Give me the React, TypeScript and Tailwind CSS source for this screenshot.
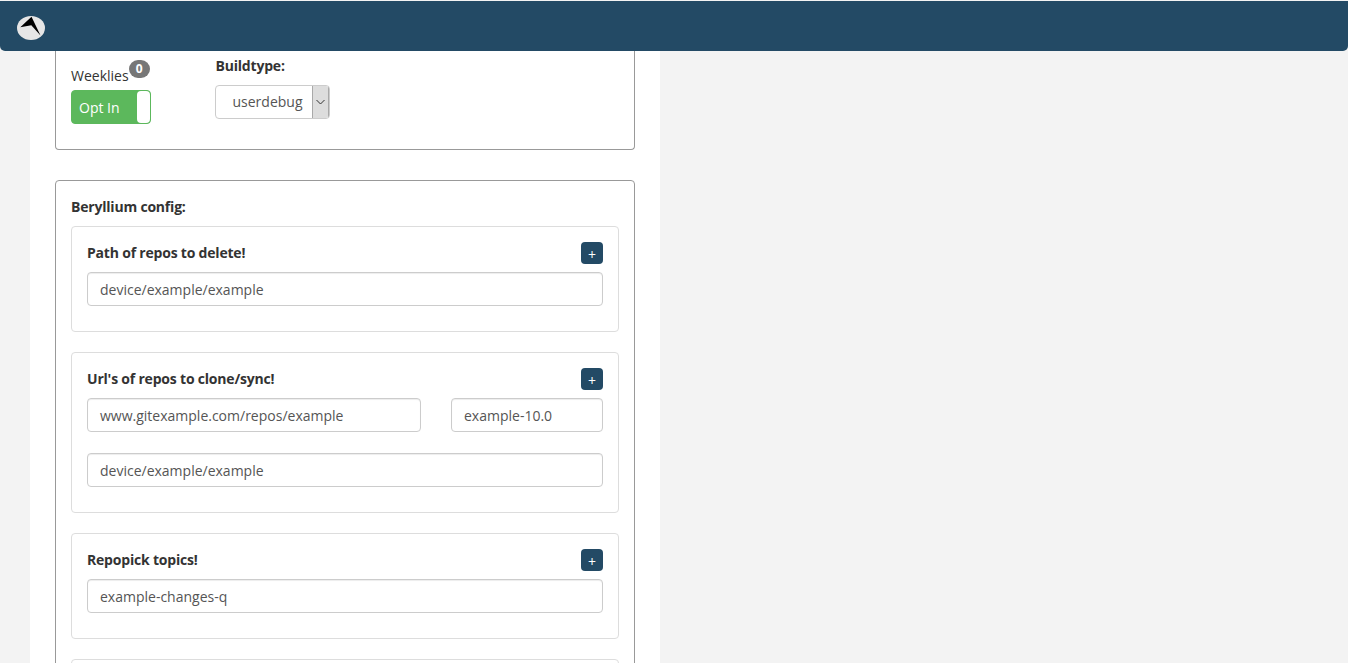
import React from "react";

function TextBox({ value, className = "" }: { value: string; className?: string }) {
  return (
    <div className={`h-[34px] rounded-[4px] border border-[#ccc] bg-white px-3 pt-px text-[14px] leading-[32px] text-[#555] shadow-[inset_0_1px_1px_rgba(0,0,0,0.075)] ${className}`}>
      {value}
    </div>
  );
}

function Head({ title }: { title: string }) {
  return (
    <div className="flex h-[30px] items-center justify-between">
      <b className="-mt-[2px] text-[14px] font-bold tracking-[-0.2px] text-[#333]">{title}</b>
      <span className="flex h-[22px] w-[22px] items-center justify-center rounded-[4px] bg-[#234a65] pt-[4px] text-[14px] leading-none text-white">+</span>
    </div>
  );
}

export default function App() {
  return (
    <div className="h-[663px] overflow-hidden bg-[#f3f3f3] pt-px font-['Open_Sans',sans-serif] text-[14px] text-[#333]">
      <header className="relative z-10 flex h-[50px] items-center rounded-b-[5px] bg-[#234a65] pl-[17px]">
        <svg className="mt-[4px]" width="28" height="24" viewBox="0 0 28 24">
          <ellipse cx="14" cy="12" rx="14" ry="12" fill="#e6e6e6" />
          <path d="M14.5 0.8 L23.5 19.5 L14.3 9.3 L3.3 11.2 Z" fill="#000" />
        </svg>
      </header>
      <main className="ml-[30px] h-[612px] w-[630px] bg-white px-[25px]">
        <section className="flex h-[99px] gap-[64px] rounded-b-[4px] border border-t-0 border-[#999] px-[15px]">
          <div className="w-[80px] pt-[13px]">
            <div className="relative h-[26px] leading-[24px]">
              Weeklies
              <span className="absolute left-[57.5px] -top-[4px] h-[18px] w-[21.5px] rounded-[9px] bg-[#777] text-center text-[12px] font-bold leading-[18px] text-white">0</span>
            </div>
            <div className="flex h-[34px] w-[80px] items-center justify-between rounded-[4px] border border-[#5cb85c] bg-[#5cb85c] pl-[7px] text-white">
              Opt In
              <span className="h-[32px] w-[13px] rounded-[4px] bg-white" />
            </div>
          </div>
          <div className="pt-[5px]">
            <b className="block h-[29px] pl-[0.5px] font-bold leading-[20px] tracking-[-0.2px]">Buildtype:</b>
            <div className="flex h-[34px] w-[115px] overflow-hidden rounded-[4px] border border-[#ccc] bg-white text-[#555]">
              <span className="flex-1 pl-[16.5px] leading-[32px]">userdebug</span>
              <span className="flex w-[17px] items-center justify-center border-x border-[#a9a9a9] bg-[#ddd]">
                <svg width="9" height="6" viewBox="0 0 9 6"><path d="M0.5 1 L4.5 5 L8.5 1" fill="none" stroke="#333" strokeWidth="1" /></svg>
              </span>
            </div>
          </div>
        </section>
        <section className="mt-[30px] rounded-[4px] border border-[#999] px-[15px] pt-[16px]">
          <b className="block h-[29px] font-bold leading-[20px] tracking-[-0.2px]">Beryllium config:</b>
          <div className="flex flex-col gap-[20px]">
            <div className="h-[106px] rounded-[4px] border border-[#ddd] px-[15px] pt-[11px]">
              <Head title="Path of repos to delete!" />
              <TextBox value="device/example/example" className="mt-[4px]" />
            </div>
            <div className="h-[161px] rounded-[4px] border border-[#ddd] px-[15px] pt-[11px]">
              <Head title="Url's of repos to clone/sync!" />
              <div className="mt-[4px] flex gap-[30px]">
                <TextBox value="www.gitexample.com/repos/example" className="w-[334px]" />
                <TextBox value="example-10.0" className="flex-1" />
              </div>
              <TextBox value="device/example/example" className="mt-[21px]" />
            </div>
            <div className="h-[106px] rounded-[4px] border border-[#ddd] px-[15px] pt-[11px]">
              <Head title="Repopick topics!" />
              <TextBox value="example-changes-q" className="mt-[4px]" />
            </div>
            <div className="h-[106px] rounded-[4px] border border-[#ddd]" />
          </div>
        </section>
      </main>
    </div>
  );
}
